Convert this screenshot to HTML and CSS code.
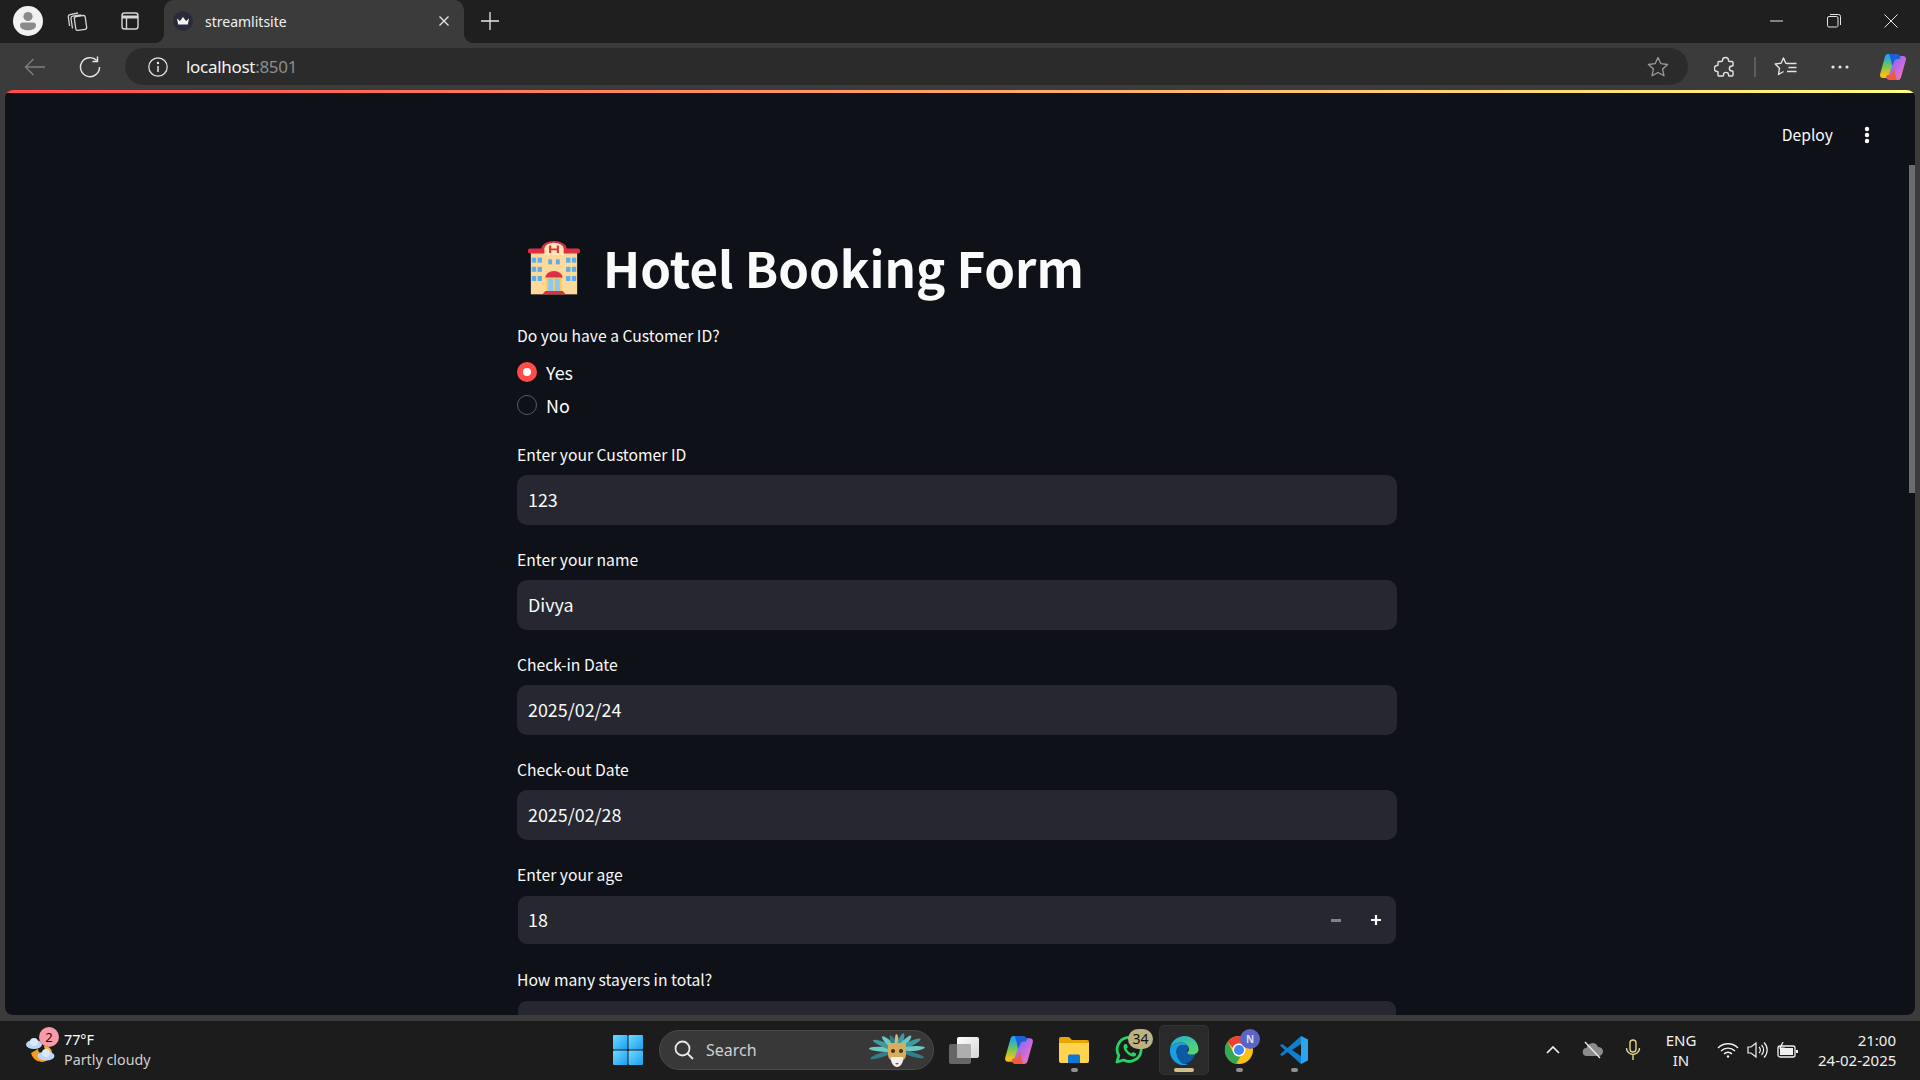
FILE: index.html
```html
<!DOCTYPE html>
<html lang="en">
<head>
<meta charset="utf-8">
<title>streamlitsite</title>
<link rel="stylesheet" href="styles.css">
</head>
<body>
<div class="tabbar">
  <div class="tab-left">
    <span class="avatar"><svg viewBox="0 0 30 30" width="30" height="30"><circle cx="15" cy="15" r="15" fill="#f2f2f2"/><circle cx="15" cy="10.500" r="4.600" fill="#8a8a8a"/><path d="M7 19.500a3 3 0 0 1 3-3h10a3 3 0 0 1 3 3c0 3-3.500 4.800-8 4.800s-8-1.800-8-4.800z" fill="#8a8a8a"/></svg></span>
    <span class="tb-icon"><svg viewBox="0 0 24 24" width="24" height="24" fill="none" stroke="#d6d6d6" stroke-width="1.300"><rect x="10" y="7" width="11" height="14" rx="2" transform="rotate(-8 15 14)"/><path d="M7.500 19.500 6 9.500a2 2 0 0 1 1.700-2.300L16 6"/><path d="M4.600 17 3.300 8a2 2 0 0 1 1.700-2.300L13 4"/></svg></span>
    <span class="tb-icon"><svg viewBox="0 0 24 24" width="24" height="24" fill="none" stroke="#d6d6d6" stroke-width="1.400"><rect x="4" y="4" width="16" height="16" rx="2.500"/><path d="M4 8h16" stroke-width="3"/><path d="M8.500 8v12"/></svg></span>
  </div>
  <div class="tab">
    <span class="favicon"><svg viewBox="0 0 20 20" width="20" height="20"><circle cx="10" cy="10" r="10" fill="#2a2b3a"/><path d="M4 7.500 7 10l3-4 3 4 3-2.500-1.200 6H5.200z" fill="#f4f4f4"/></svg></span>
    <span class="tab-title">streamlitsite</span>
    <svg class="tab-close" viewBox="0 0 12 12" width="12" height="12" stroke="#e8e8e8" stroke-width="1.300"><path d="M1.500 1.500l9 9M10.500 1.500l-9 9"/></svg>
  </div>
  <svg class="plus" viewBox="0 0 18 18" width="18" height="18" stroke="#e8e8e8" stroke-width="1.300"><path d="M9 0v18M0 9h18"/></svg>
  <div class="win-controls">
    <svg viewBox="0 0 14 14" width="14" height="14" stroke="#e6e6e6" stroke-width="1"><path d="M0 7h13"/></svg>
    <svg viewBox="0 0 14 14" width="14" height="14" fill="none" stroke="#e6e6e6" stroke-width="1"><rect x=".5" y="2.500" width="10.500" height="10.500" rx="1.500"/><path d="M3 .5h8.500a2 2 0 0 1 2 2V11"/></svg>
    <svg viewBox="0 0 14 14" width="14" height="14" stroke="#e6e6e6" stroke-width="1"><path d="M.5.5l13 13M13.500.5l-13 13"/></svg>
  </div>
</div>

<div class="toolbar">
  <svg class="nav-back" viewBox="0 0 22 18" width="22" height="18" fill="none" stroke="#7f7f7f" stroke-width="1.400"><path d="M21 9H1.500M9.500 1 1.500 9l8 8"/></svg>
  <svg class="nav-reload" viewBox="0 0 22 22" width="22" height="22" fill="none" stroke="#e8e8e8" stroke-width="1.400"><path d="M17.800 4.500A9.500 9.500 0 1 0 20.500 11"/><path d="M18.500 .5v5h-5"/></svg>
  <div class="address">
    <svg viewBox="0 0 20 20" width="20" height="20" fill="none" stroke="#e8e8e8" stroke-width="1.200"><circle cx="10" cy="10" r="9.200"/><path d="M10 9v6" stroke-width="1.500"/><circle cx="10" cy="6" r=".6" fill="#e8e8e8"/></svg>
    <span class="url">localhost<span class="url-port">:8501</span></span>
    <svg class="star" viewBox="0 0 22 22" width="22" height="22" fill="none" stroke="#9a9a9a" stroke-width="1.300" stroke-linejoin="round"><path d="M11 1.500l2.900 6.200 6.700.8-5 4.600 1.400 6.700L11 16.500l-6 3.300 1.400-6.700-5-4.600 6.700-.8z"/></svg>
  </div>
  <div class="tools">
    <svg viewBox="0 0 22 22" width="22" height="22" fill="none" stroke="#e4e4e4" stroke-width="1.400" stroke-linejoin="round"><path d="M8.500 4.500c0-4 6-4 6 0 0 .5.500 1 1 1H18a1 1 0 0 1 1 1v3c0 .5-.5.5-1 .5-3.500 0-3.500 5 0 5 .5 0 1 0 1 .5V19a1 1 0 0 1-1 1h-3c-.5 0-.5-.5-.5-1 0-3.500-5-3.500-5 0 0 .5 0 1-.5 1H5a1 1 0 0 1-1-1v-3c0-.5-.5-.5-1-.5-3.500 0-3.500-6 0-6 .5 0 1 0 1-.5V6.500a1 1 0 0 1 1-1h2.500c.5 0 1-.5 1-1z"/></svg>
    <span class="tool-sep"></span>
    <svg viewBox="0 0 24 22" width="24" height="22" fill="none" stroke="#e4e4e4" stroke-width="1.400" stroke-linejoin="round"><path d="M14 7.500 11.800 7.200 9.500 2 7 7.200 1.200 8 5.500 12.200 4.500 18.500 9.500 15.500"/><path d="M13.500 7.500h9M14.500 11.500h8M13 15.500h9.500" stroke-width="1.300"/></svg>
    <svg viewBox="0 0 20 6" width="20" height="6" fill="#e4e4e4"><circle cx="3" cy="3" r="1.600"/><circle cx="10" cy="3" r="1.600"/><circle cx="17" cy="3" r="1.600"/></svg>
    <svg viewBox="0 0 28 26" width="28" height="26">
      <defs>
        <linearGradient id="cp1" x1="0" y1="0" x2="0" y2="1"><stop offset="0" stop-color="#1fa8e8"/><stop offset=".55" stop-color="#7cc84a"/><stop offset="1" stop-color="#f7c01c"/></linearGradient>
        <linearGradient id="cp2" x1="0" y1="0" x2="1" y2="1"><stop offset="0" stop-color="#7d6cf0"/><stop offset=".6" stop-color="#c86ae0"/><stop offset="1" stop-color="#f277a8"/></linearGradient>
        <g id="copilot">
          <path d="M9 3h7L9 21H4z" fill="url(#cp1)" stroke="url(#cp1)" stroke-width="6" stroke-linejoin="round"/>
          <path d="M19 5h5L19 23h-7z" fill="url(#cp2)" stroke="url(#cp2)" stroke-width="6" stroke-linejoin="round"/>
          <path d="M10 0h8a4 4 0 0 1 3.500 3l-1 2h-2c-2 0-3 1-3.500 3L13 12l-1-6z" fill="#1d5fd8"/>
          <path d="M18 26h-8a4 4 0 0 1-3-3l1-2h2c2 0 3-1 3.500-3L15 14l1 6z" fill="#ef5a3c"/>
        </g>
      </defs>
      <use href="#copilot"/>
    </svg>
  </div>
</div>

<main class="viewport">
  <div class="page">
    <div class="accent"></div>
    <div class="page-body">
      <div class="scroll-area">
        <header class="st-header">
          <span class="deploy">Deploy</span>
          <svg viewBox="0 0 6 18" width="6" height="18" fill="#fafafa"><circle cx="3" cy="3" r="2.200"/><circle cx="3" cy="9" r="2.200"/><circle cx="3" cy="15" r="2.200"/></svg>
        </header>
        <div class="form">
          <h1 class="title">
            <svg class="hotel" viewBox="0 0 56 66" width="54" height="55" preserveAspectRatio="none">
              <rect x="4" y="10" width="48" height="54" fill="#fdd99b"/>
              <rect x="1" y="9" width="54" height="6" rx="2" fill="#dd2e44"/>
              <path d="M15 9a13 9 0 0 1 26 0v4H15z" fill="#dd2e44"/>
              <path d="M18 9a10 7 0 0 1 20 0v8H18z" fill="#ffe8b6"/>
              <path d="M24 5.500v9M32 5.500v9M24 10h8" stroke="#dd2e44" stroke-width="2.200" fill="none"/>
              <g fill="#5dadec"><rect x="5" y="20" width="4.500" height="6"/><rect x="11" y="20" width="4.500" height="6"/><rect x="40.500" y="20" width="4.500" height="6"/><rect x="46.500" y="20" width="4.500" height="6"/><rect x="5" y="31" width="4.500" height="6"/><rect x="11" y="31" width="4.500" height="6"/><rect x="40.500" y="31" width="4.500" height="6"/><rect x="46.500" y="31" width="4.500" height="6"/><rect x="5" y="42" width="4.500" height="6"/><rect x="11" y="42" width="4.500" height="6"/><rect x="40.500" y="42" width="4.500" height="6"/><rect x="46.500" y="42" width="4.500" height="6"/><rect x="22" y="22" width="4" height="6"/><rect x="30" y="22" width="4" height="6"/></g>
              <path d="M19 44a9 8 0 0 1 18 0z" fill="#dd2e44"/>
              <rect x="20" y="44" width="16" height="16" fill="#ffcc4d"/>
              <rect x="22" y="45" width="5" height="15" fill="#88c9f9"/><rect x="29" y="45" width="5" height="15" fill="#88c9f9"/>
              <path d="M16 64l3-4h18l3 4z" fill="#dd2e44"/>
            </svg>
            <span class="title-text">Hotel Booking Form</span>
          </h1>
          <div class="radio-group">
            <div class="label">Do you have a Customer ID?</div>
            <div class="radio-row"><span class="radio radio-on"></span><span>Yes</span></div>
            <div class="radio-row"><span class="radio"></span><span>No</span></div>
          </div>
          <div class="field">
            <div class="label">Enter your Customer ID</div>
            <div class="input">123</div>
          </div>
          <div class="field">
            <div class="label">Enter your name</div>
            <div class="input">Divya</div>
          </div>
          <div class="field">
            <div class="label">Check-in Date</div>
            <div class="input">2025/02/24</div>
          </div>
          <div class="field">
            <div class="label">Check-out Date</div>
            <div class="input">2025/02/28</div>
          </div>
          <div class="field">
            <div class="label">Enter your age</div>
            <div class="input input-number">
              <span class="num-value">18</span>
              <span class="step-minus"></span>
              <svg class="step-plus" viewBox="0 0 10 10" width="10" height="10" stroke="#fff" stroke-width="2.200"><path d="M5 0v10M0 5h10"/></svg>
            </div>
          </div>
          <div class="field">
            <div class="label">How many stayers in total?</div>
            <div class="input input-number"></div>
          </div>
        </div>
      </div>
      <div class="scrollbar"><div class="thumb"></div></div>
    </div>
  </div>
</main>

<footer class="taskbar">
  <div class="weather">
    <span class="weather-icon">
      <svg viewBox="0 0 34 34" width="34" height="34">
        <path d="M6 20a11 11 0 0 0 21 2c-3 2-8 1-11-1-2-2-3-3-3-5z" fill="#f39c1f"/>
        <path d="M19 13a7 7 0 0 1 8 7l-6 1z" fill="#f7b733"/>
        <ellipse cx="9" cy="11.500" rx="8" ry="4.500" fill="#bcd6f5"/><circle cx="9" cy="9" r="4" fill="#d9e8fb"/>
        <ellipse cx="21" cy="23" rx="8.500" ry="4.500" fill="#bcd6f5"/><circle cx="21" cy="20" r="4" fill="#d9e8fb"/>
      </svg>
      <span class="badge-red">2</span>
    </span>
    <div class="weather-text">
      <div class="temp">77°F</div>
      <div class="cond">Partly cloudy</div>
    </div>
  </div>

  <div class="task-center">
    <svg class="win-logo" viewBox="0 0 30 30" width="30" height="30"><defs><linearGradient id="w1" x1="0" y1="0" x2="1" y2="1"><stop offset="0" stop-color="#6fdcff"/><stop offset="1" stop-color="#1a9cf0"/></linearGradient></defs><rect width="14.500" height="14.500" rx="1" fill="url(#w1)"/><rect x="15.500" width="14.500" height="14.500" rx="1" fill="url(#w1)"/><rect y="15.500" width="14.500" height="14.500" rx="1" fill="url(#w1)"/><rect x="15.500" y="15.500" width="14.500" height="14.500" rx="1" fill="url(#w1)"/></svg>
    <div class="search">
      <svg viewBox="0 0 20 20" width="20" height="20" fill="none" stroke="#e8e8e8" stroke-width="1.800"><circle cx="8.500" cy="8.500" r="7"/><path d="M13.500 13.500 19 19"/></svg>
      <span class="search-text">Search</span>
      <svg class="mask" viewBox="0 0 58 36" width="58" height="36">
        <g transform="translate(0 -2)">
          <ellipse cx="13" cy="20" rx="12" ry="2.200" fill="#2f8088" transform="rotate(-18 29 20)"/>
          <ellipse cx="15" cy="20" rx="14" ry="2.500" fill="#6fc7c2" transform="rotate(3 29 20)"/>
          <ellipse cx="16" cy="20" rx="13" ry="2.500" fill="#3f9aa0" transform="rotate(22 29 20)"/>
          <ellipse cx="19" cy="20" rx="10" ry="2.500" fill="#6fc7c2" transform="rotate(42 29 20)"/>
          <ellipse cx="21" cy="20" rx="8" ry="2.500" fill="#2f8088" transform="rotate(65 29 20)"/>
          <ellipse cx="21" cy="20" rx="8" ry="2" fill="#c9b98a" transform="rotate(88 29 20)"/>
          <ellipse cx="20" cy="20" rx="9" ry="2.500" fill="#3f9aa0" transform="rotate(112 29 20)"/>
          <ellipse cx="19" cy="20" rx="10" ry="2.500" fill="#6fc7c2" transform="rotate(135 29 20)"/>
          <ellipse cx="16" cy="20" rx="13" ry="2.500" fill="#3f9aa0" transform="rotate(155 29 20)"/>
          <ellipse cx="15" cy="20" rx="14" ry="2.500" fill="#6fc7c2" transform="rotate(175 29 20)"/>
          <ellipse cx="13" cy="20" rx="12" ry="2.200" fill="#2f8088" transform="rotate(196 29 20)"/>
          <path d="M20 13h18v12c0 3-2 5-4 6H24c-2-1-4-3-4-6z" fill="#d7ad5e"/>
          <path d="M23 27h12c1 4-2 10-6 10s-7-6-6-10z" fill="#f3eeee"/>
          <circle cx="25" cy="21" r="2" fill="#4a2f12"/><circle cx="33" cy="21" r="2" fill="#4a2f12"/>
          <path d="M27 33h4l-2 1.800z" fill="#d0302b"/>
        </g>
      </svg>
    </div>
    <span class="task-btn"><svg viewBox="0 0 30 27" width="30" height="27"><defs><linearGradient id="tv" x1="0" y1="0" x2="1" y2="1"><stop offset="0" stop-color="#fff"/><stop offset="1" stop-color="#d4d4d4"/></linearGradient></defs><rect y="7" width="22" height="20" rx="2" fill="#666"/><rect x="8" width="22" height="21" rx="2" fill="url(#tv)"/><rect x="8" y="7" width="14" height="14" rx="1" fill="#aeaeae"/></svg></span>
    <span class="task-btn"><svg viewBox="0 0 28 26" width="30" height="28"><use href="#copilot"/></svg></span>
    <span class="task-btn has-dot"><svg viewBox="0 0 30 30" width="30" height="30"><path d="M0 4a2 2 0 0 1 2-2h8l3 3h15a2 2 0 0 1 2 2v6H0z" fill="#e8a600"/><path d="M0 8h30v18a2 2 0 0 1-2 2H2a2 2 0 0 1-2-2z" fill="#ffd34e"/><path d="M9 21a1.500 1.500 0 0 1 1.500-1.500h9A1.500 1.500 0 0 1 21 21v7H9z" fill="#0f78d4"/></svg></span>
    <span class="task-btn"><svg viewBox="0 0 30 30" width="30" height="30" fill="none"><path d="M3 27l1.800-6.500A12 12 0 1 1 9.500 25z" stroke="#25d366" stroke-width="2.800" stroke-linejoin="round"/><path d="M11 9c-2 1-2 4 0 7s6 6 9 5.500c2-.5 2.500-2 2-3l-3-1.500-1.500 1.500c-2-.5-4-2.500-5-5l1.500-1.500-1.500-3z" fill="#25d366"/></svg><span class="badge-count">34</span></span>
    <span class="task-btn is-active"><svg viewBox="0 0 30 30" width="30" height="30"><defs><linearGradient id="e1" x1="0" y1="0" x2="1" y2="1"><stop offset="0" stop-color="#1fa9dc"/><stop offset="1" stop-color="#5fe05a"/></linearGradient></defs><path d="M1 14C2 10 6.500 7.500 12 7.500c3 0 6 1.500 7 4-1-1-3-1.500-5-1.500-4 0-6.500 2.500-6.500 6.500 0 6 4.500 12 11.500 13-1.500.5-3 .7-4.500.7C7 30 0 23 1 14z" fill="#1b9de2"/><path d="M7.500 16.500c0-4 2.500-6.500 6.500-6.500 2 0 4 .5 5 1.500.5 1 .5 2-.5 3.500-1 1.500 1 3.500 4 4h3.500c-1 5-5.500 9.500-11 10-4.500-1-7.500-7-7.500-12.500z" fill="#0c59a4"/><path d="M1 14C2 6 8.500 1 15.500 1 24 1 29.500 8 29.500 14.500c0 3-3 5-7 5-2.500 0-4.500-.5-4-2 .5-1 1.500-1.500 1.500-3.500C19.500 10 16 7.500 12 7.500 6 7.500 2 10 1 14z" fill="url(#e1)"/></svg></span>
    <span class="task-btn has-dot"><svg viewBox="0 0 30 30" width="30" height="30"><circle cx="15" cy="15" r="14" fill="#fbc116"/><path d="M15 1a14 14 0 0 1 12.500 7.500H15a7 7 0 0 0-6.500 4L3.500 7A14 14 0 0 1 15 1z" fill="#ea4335"/><path d="M3.500 7l6 10.500a7 7 0 0 0 7 4L12 29A14 14 0 0 1 3.500 7z" fill="#34a853"/><circle cx="15" cy="15" r="6.500" fill="#fff"/><circle cx="15" cy="15" r="5" fill="#4285f4"/></svg><span class="badge-n">N</span></span>
    <span class="task-btn has-dot"><svg viewBox="0 0 30 30" width="30" height="30"><path d="M22 1 8.500 13 3 9 1 10.500 6 15 1 19.500 3 21l5.500-4L22 29v-8l-9-6 9-6z" fill="#0f7fd0"/><path d="M22 1l7 3.500v21L22 29z" fill="#2aa5f0"/></svg></span>
  </div>

  <div class="tray">
    <svg class="tray-chevron" viewBox="0 0 14 8" width="14" height="8" fill="none" stroke="#f0f0f0" stroke-width="1.700"><path d="M1 7l6-6 6 6"/></svg>
    <svg class="tray-cloud" viewBox="0 0 22 18" width="22" height="18"><path d="M5 15a4 4 0 0 1-.5-8A6 6 0 0 1 16 6a4.500 4.500 0 0 1 1 9z" fill="#8c8c8c"/><path d="M3 1l15 16" stroke="#f0f0f0" stroke-width="1.300"/></svg>
    <svg class="tray-mic" viewBox="0 0 16 22" width="16" height="22" fill="none" stroke="#e1d58f" stroke-width="1.400"><rect x="5" y="1" width="6" height="12" rx="3"/><path d="M1.500 9a6.500 6.500 0 0 0 13 0M8 15.500V21"/></svg>
    <div class="lang"><div>ENG</div><div>IN</div></div>
    <svg class="tray-wifi" viewBox="0 0 22 16" width="22" height="16" fill="none" stroke="#f0f0f0" stroke-width="1.400"><path d="M1 6a14 14 0 0 1 20 0M4 9a10 10 0 0 1 14 0M7 12a5.500 5.500 0 0 1 8 0"/><circle cx="11" cy="14.500" r="1.200" fill="#f0f0f0" stroke="none"/></svg>
    <svg class="tray-vol" viewBox="0 0 22 18" width="22" height="18" fill="none" stroke="#f0f0f0" stroke-width="1.200"><path d="M1 6h3l5-4v14l-5-4H1z"/><path d="M12 6a4 4 0 0 1 0 6M14.500 4a7 7 0 0 1 0 10M17 1.500a10.500 10.500 0 0 1 0 15"/></svg>
    <svg class="tray-bat" viewBox="0 0 22 16" width="22" height="16" fill="none" stroke="#f0f0f0" stroke-width="1.300"><rect x="1" y="4" width="17" height="11" rx="2"/><rect x="3" y="6" width="13" height="7" fill="#f0f0f0" stroke="none"/><path d="M20 8v3" stroke-width="2"/><path d="M6 0 3 6h4l-1 4" stroke-width="1.200"/></svg>
    <div class="clock"><div>21:00</div><div>24-02-2025</div></div>
  </div>
</footer>
</body>
</html>
```
FILE: styles.css
```css
* { box-sizing: border-box; }
html, body { margin: 0; height: 100%; }
body {
  width: 1920px;
  height: 1080px;
  overflow: hidden;
  display: flex;
  flex-direction: column;
  background: #3b3b3b;
  font-family: "Noto Sans", "Open Sans", sans-serif;
  color: #fff;
}
svg { display: block; flex: none; }

/* browser tab strip */
.tabbar {
  height: 43px;
  flex: none;
  background: #1f1f1f;
  display: flex;
  align-items: center;
  padding-left: 13px;
}
.tab-left { display: flex; align-items: center; width: 151px; padding-bottom: 1px; }
.avatar { width: 30px; margin-right: 22px; }
.tb-icon { width: 24px; margin-right: 29px; }
.tab {
  position: relative;
  width: 300px;
  height: 43px;
  background: #3b3b3b;
  border-radius: 10px 10px 0 0;
  display: flex;
  align-items: center;
  padding: 0 14px 1px 9px;
}
.tab::before, .tab::after {
  content: "";
  position: absolute;
  bottom: 0;
  width: 10px;
  height: 10px;
}
.tab::before { left: -10px; background: radial-gradient(circle at 0 0, transparent 10px, #3b3b3b 10.500px); }
.tab::after { right: -10px; background: radial-gradient(circle at 100% 0, transparent 10px, #3b3b3b 10.500px); }
.favicon { width: 20px; margin-right: 12px; }
.tab-title { flex: 1; font-size: 14px; color: #f0f0f0; }
.plus { margin: 0 0 2px 17px; }
.win-controls {
  margin-left: auto;
  display: flex;
  gap: 43px;
  padding: 0 22px 1px 0;
}

/* browser toolbar */
.toolbar {
  height: 47px;
  flex: none;
  display: flex;
  align-items: center;
  padding-left: 24px;
}
.nav-back { margin-right: 33px; }
.nav-reload { margin-right: 24px; }
.address {
  width: 1563px;
  height: 37px;
  background: #2b2b2b;
  border-radius: 19px;
  display: flex;
  align-items: center;
  padding: 0 19px 0 23px;
}
.url { margin-left: 18px; font-size: 17px; letter-spacing: -0.3px; color: #f4f4f4; }
.url-port { color: #8d8d8d; }
.star { margin-left: auto; }
.tools {
  display: flex;
  align-items: center;
  margin-left: 26px;
}
.tool-sep { width: 2px; height: 20px; background: #5e5e5e; margin: 0 18px; }
.tools svg:nth-of-type(3) { margin: 0 29px 0 32px; }

/* page */
.viewport {
  height: 931px;
  flex: none;
  padding: 0 5px 6px;
}
.page {
  height: 925px;
  background: #0e1117;
  border-radius: 8px;
  display: flex;
  flex-direction: column;
  overflow: hidden;
  font-family: "Noto Sans CJK SC", "Noto Sans CJK JP", "Noto Sans", sans-serif;
  color: #fafafa;
}
.accent { height: 3px; flex: none; background: linear-gradient(90deg, #ff4b4b, #fffd80); }
.page-body { flex: 1; min-height: 0; display: flex; overflow: hidden; }
.scroll-area { flex: 1; min-width: 0; }
.scrollbar { width: 6px; padding-top: 72px; flex: none; }
.thumb { height: 328px; background: #6c6c6f; }
.st-header {
  height: 63px;
  padding: 21px 39px 0 0;
  display: flex;
  justify-content: flex-end;
  align-items: center;
  gap: 31px;
}
.deploy { font-size: 15.700px; padding-bottom: 2px; }
.form { width: 880px; margin: 69px auto 0; }
.title {
  margin: 0 0 13px 10px;
  height: 86px;
  display: flex;
  align-items: center;
  gap: 22px;
  font-size: 49.200px;
  font-weight: 700;
  line-height: 1;
  color: #fafafa;
}
.title-text { padding-bottom: 3px; }
.hotel { width: 54px; height: 55px; }
.label { font-size: 15.700px; line-height: 23px; margin-bottom: 2px; }
.radio-group { margin-bottom: 21.500px; }
.radio-group .label { margin-bottom: 8.500px; }
.radio-row {
  height: 33px;
  display: flex;
  align-items: center;
  gap: 9px;
  font-size: 17.900px;
}
.radio {
  width: 20px;
  height: 20px;
  border-radius: 50%;
  border: 1.500px solid #5a5c66;
  background: #0e1117;
  flex: none;
}
.radio-on { border: 6px solid #ff4b4b; background: #fff; }
.field { margin-bottom: 23px; }
.field .label { margin-bottom: 9px; }
.input {
  height: 50px;
  background: #262730;
  border-radius: 10px;
  font-size: 17.900px;
  display: flex;
  align-items: center;
  padding: 0 11px 2px;
  color: #fafafa;
}
.input-number {
  border: 1px solid #0e1117;
  padding: 0 10px;
}
.num-value { flex: 1; padding-bottom: 2px; }
.step-minus { width: 10px; height: 3px; background: #82838f; margin-right: 30px; }
.step-plus { margin-right: 5px; }

/* taskbar */
.taskbar {
  height: 59px;
  flex: none;
  background: #1c1c1c;
  position: relative;
  display: flex;
  align-items: center;
  padding-bottom: 1px;
  font-family: "Noto Sans", "Open Sans", sans-serif;
}
.weather { display: flex; align-items: center; padding-left: 25px; width: 613px; flex: none; }
.weather-icon { position: relative; width: 34px; height: 34px; margin-right: 5px; }
.badge-red {
  position: absolute;
  left: 14px;
  top: -6px;
  width: 20px;
  height: 20px;
  border-radius: 50%;
  background: #f79aaa;
  color: #111;
  font-size: 13px;
  line-height: 20px;
  text-align: center;
}
.weather-text { font-size: 14.300px; line-height: 20px; }
.temp { color: #fff; }
.cond { color: #cfcfcf; }
.task-center { display: flex; align-items: center; }
.win-logo { margin-right: 16px; }
.search {
  width: 275px;
  height: 40px;
  border-radius: 20px;
  background: #383838;
  border: 1px solid #4a4a4a;
  display: flex;
  align-items: center;
  padding: 0 7px 0 14px;
  margin-right: 5px;
}
.search-text { margin-left: 12px; font-size: 16px; color: #d0d0d0; }
.mask { margin-left: auto; }
.task-btn {
  position: relative;
  width: 50px;
  height: 50px;
  margin-right: 5px;
  display: flex;
  align-items: center;
  justify-content: center;
  border-radius: 5px;
  border: 1px solid transparent;
}
.has-dot::after, .is-active::after {
  content: "";
  position: absolute;
  bottom: 2px;
  left: 50%;
  width: 7px;
  height: 4px;
  margin-left: -3.500px;
  border-radius: 2px;
  background: #8f8f8f;
}
.is-active { background: #2a2a2a; border-color: #333; }
.is-active::after { width: 20px; margin-left: -10px; background: #cdbf8e; }
.badge-count {
  position: absolute;
  left: 23px;
  top: 3px;
  width: 25px;
  height: 20px;
  border-radius: 10px;
  background: #bdb382;
  color: #111;
  font-size: 14px;
  line-height: 20px;
  text-align: center;
}
.badge-n {
  position: absolute;
  left: 25px;
  top: 3px;
  width: 20px;
  height: 20px;
  border-radius: 50%;
  background: #5b64c4;
  color: #d8dcf5;
  font-size: 10px;
  font-weight: 700;
  line-height: 20px;
  text-align: center;
}
.tray { position: absolute; inset: 0 24px 1px auto; display: flex; align-items: center; }
.tray-chevron { margin-right: 22px; }
.tray-cloud { margin-right: 21px; }
.tray-mic { margin-right: 22px; }
.lang { width: 36px; text-align: center; font-size: 15px; line-height: 20px; margin-right: 18px; color: #f0f0f0; }
.tray-wifi { margin-right: 8px; }
.tray-vol { margin-right: 8px; }
.tray-bat { margin-right: 19px; }
.clock { text-align: right; font-size: 15px; line-height: 20px; color: #f0f0f0; width: 78px; white-space: nowrap; }
```
